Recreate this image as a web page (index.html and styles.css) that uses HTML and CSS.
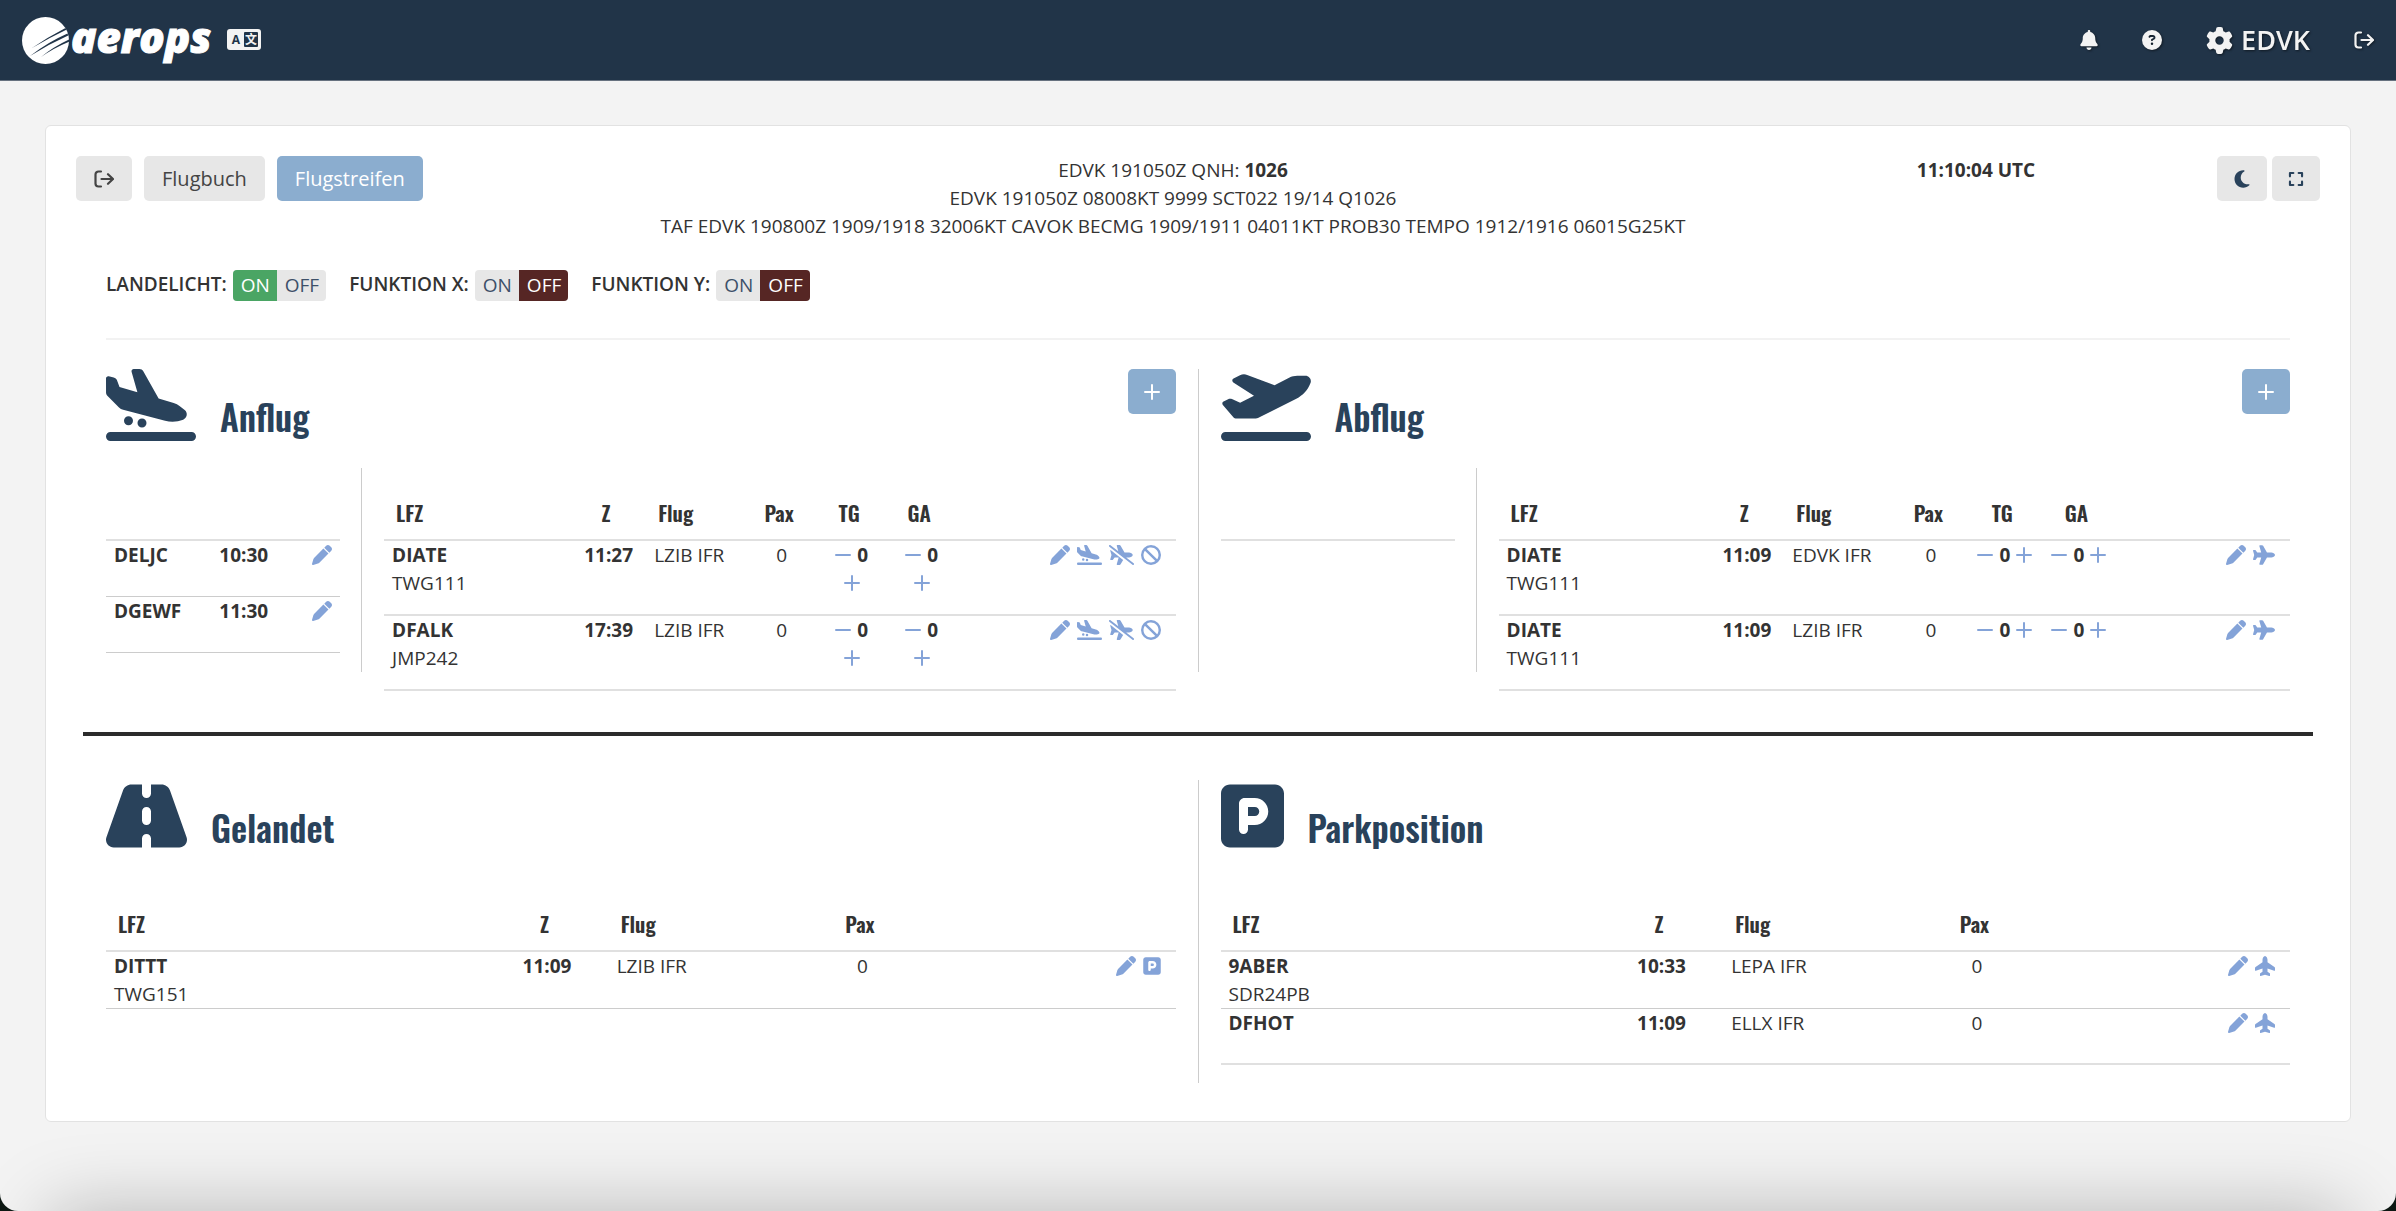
FILE: index.html
```html
<!DOCTYPE html>
<html lang="de">
<head>
<meta charset="utf-8">
<meta name="viewport" content="width=device-width, initial-scale=1">
<title>aerops – Flugstreifen</title>
<link rel="stylesheet" href="styles.css">
</head>
<body>
<svg class="sprite" aria-hidden="true">
  <symbol id="i-arrival" viewBox="0 0 640 512"><path d="M.3 166.9L0 68C0 57.7 9.5 50.1 19.5 52.3l35.6 7.9c10.6 2.3 19.2 9.9 23 20L96 128l127.3 37.6L181.8 20.4C178.9 10.2 186.6 0 197.2 0h40.1c11.6 0 22.2 6.2 27.9 16.3l109 193.8 107.2 31.7c15.9 4.7 30.8 12.5 43.7 22.8l34.4 27.6c24 19.2 18.1 57.3-10.7 68.2c-41.2 15.6-86.2 18.1-128.8 7L121.7 289.8c-11-2.9-21.2-8.7-29.3-16.9L9.5 189.4c-5.9-6-9.3-14.1-9.3-22.5zM32 448l576 0c17.7 0 32 14.3 32 32s-14.3 32-32 32L32 512c-17.7 0-32-14.3-32-32s14.3-32 32-32zm96-80a32 32 0 1 1 64 0 32 32 0 1 1 -64 0zm128-16a32 32 0 1 1 0 64 32 32 0 1 1 0-64z"/></symbol>
  <symbol id="i-departure" viewBox="0 0 640 512"><path d="M381 114.9L186.1 41.8c-16.7-6.2-35.2-5.3-51.1 2.7L89.1 67.4C78 73 77.2 88.5 87.6 95.2l146.9 94.5L136 240 77.8 214.1c-8.7-3.9-18.8-3.7-27.3 .6L18.3 230.8c-9.3 4.7-11.8 16.8-5 24.7l73.1 85.3c6.1 7.1 15 11.2 24.3 11.2H248.4c5 0 9.9-1.2 14.3-3.4L535.6 212.2c46.5-23.3 82.5-63.3 100.8-112C645.9 75 627.2 48 600.2 48H542.4c-20.2 0-40.2 4.8-58.2 14L381 114.9zM0 480c0 17.7 14.3 32 32 32H608c17.7 0 32-14.3 32-32s-14.3-32-32-32H32c-17.7 0-32 14.3-32 32z"/></symbol>
  <symbol id="i-road" viewBox="0 0 576 512"><path d="M256 32H181.2c-27.1 0-51.3 17.1-60.3 42.6L3.1 407.2C1.1 413 0 419.2 0 425.4C0 455.5 24.5 480 54.6 480H256V416c0-17.7 14.3-32 32-32s32 14.3 32 32v64H521.4c30.2 0 54.6-24.5 54.6-54.6c0-6.2-1.1-12.4-3.1-18.2L455.1 74.6C446 49.1 421.9 32 394.8 32H320V96c0 17.7-14.3 32-32 32s-32-14.3-32-32V32zm64 192v64c0 17.7-14.3 32-32 32s-32-14.3-32-32V224c0-17.7 14.3-32 32-32s32 14.3 32 32z"/></symbol>
  <symbol id="i-parking" viewBox="0 0 448 512"><path d="M64 32C28.7 32 0 60.7 0 96V416c0 35.3 28.7 64 64 64H384c35.3 0 64-28.7 64-64V96c0-35.3-28.7-64-64-64H64zM192 256h48c17.7 0 32-14.3 32-32s-14.3-32-32-32H192v64zm48 64H192v32c0 17.7-14.3 32-32 32s-32-14.3-32-32V288 168c0-22.1 17.9-40 40-40h72c53 0 96 43 96 96s-43 96-96 96z"/></symbol>
  <symbol id="i-plane" viewBox="0 0 576 512"><path d="M482.3 192c34.2 0 93.7 29 93.7 64c0 36-59.5 64-93.7 64l-116.6 0L265.2 495.9c-5.7 10-16.3 16.1-27.8 16.1l-56.2 0c-10.6 0-18.3-10.2-15.4-20.4l49-171.6L112 320 68.8 377.6c-3 4-7.8 6.4-12.8 6.4l-42 0c-7.8 0-14-6.3-14-14c0-1.3 .2-2.6 .5-3.9L32 256 .5 145.9c-.4-1.3-.5-2.6-.5-3.9c0-7.8 6.3-14 14-14l42 0c5 0 9.8 2.4 12.8 6.4L112 192l102.9 0-49-171.6C162.9 10.2 170.6 0 181.2 0l56.2 0c11.5 0 22.1 6.2 27.8 16.1L365.7 192l116.6 0z"/></symbol>
  <symbol id="i-plane-up" viewBox="0 0 512 512"><path d="M192 93.7C192 59.5 221 0 256 0c36 0 64 59.5 64 93.7l0 66.3L497.8 278.5c8.9 5.9 14.2 15.9 14.2 26.6v56.7c0 10.9-10.7 18.6-21.1 15.2L320 320v80l57.6 43.2c4 3 6.4 7.8 6.4 12.8v42c0 7.8-6.3 14-14 14c-1.3 0-2.6-.2-3.9-.5L256 480 145.9 511.5c-1.3 .4-2.6 .5-3.9 .5c-7.8 0-14-6.3-14-14V456c0-5 2.4-9.8 6.4-12.8L192 400V320L21.1 377C10.7 380.4 0 372.7 0 361.8V305.1c0-10.7 5.3-20.7 14.2-26.6L192 160V93.7z"/></symbol>
  <symbol id="i-plane-slash" viewBox="0 0 640 512"><path d="M514.3 192c34.2 0 93.7 29 93.7 64c0 36-59.5 64-93.7 64H440.6L630.8 469.1c10.4 8.2 12.3 23.3 4.1 33.7s-23.3 12.3-33.7 4.1L9.2 42.9C-1.2 34.7-3.1 19.6 5.1 9.2S28.4-3.1 38.8 5.1L238.1 161.3 197.8 20.4C194.9 10.2 202.6 0 213.2 0h56.2c11.5 0 22.1 6.2 27.8 16.1L397.7 192l116.6 0zM41.5 128.7l321 252.9L297.2 495.9c-5.7 10-16.3 16.1-27.8 16.1l-56.2 0c-10.6 0-18.3-10.2-15.4-20.4l49-171.6H144l-43.2 57.6c-3 4-7.8 6.4-12.8 6.4H46c-7.8 0-14-6.3-14-14c0-1.3 .2-2.6 .5-3.9L64 256 32.5 145.9c-.4-1.3-.5-2.6-.5-3.9c0-6.2 4-11.4 9.5-13.3z"/></symbol>
  <symbol id="i-ban" viewBox="0 0 512 512"><path d="M367.2 412.5L99.5 144.8C77.1 176.1 64 214.5 64 256c0 106 86 192 192 192c41.5 0 79.9-13.1 111.2-35.5zm45.3-45.3C434.9 335.9 448 297.5 448 256c0-106-86-192-192-192c-41.5 0-79.9 13.1-111.2 35.5L412.5 367.2zM0 256a256 256 0 1 1 512 0A256 256 0 1 1 0 256z"/></symbol>
  <symbol id="i-pen" viewBox="0 0 512 512"><path d="M362.7 19.3L314.3 67.7 444.3 197.7l48.4-48.4c25-25 25-65.5 0-90.5L453.3 19.3c-25-25-65.5-25-90.5 0zm-71 71L58.6 323.5c-10.4 10.4-18 23.3-22.2 37.4L1 481.2C-1.5 489.7 .8 498.8 7 505s15.3 8.5 23.7 6.1l120.3-35.4c14.1-4.2 27-11.8 37.4-22.2L421.7 220.3 291.7 90.3z"/></symbol>
  <symbol id="i-minus" viewBox="0 0 16 20"><path d="M1 10h14" fill="none" stroke="currentColor" stroke-width="2" stroke-linecap="round"/></symbol>
  <symbol id="i-plus" viewBox="0 0 16 20"><path d="M1 10h14M8 3v14" fill="none" stroke="currentColor" stroke-width="2" stroke-linecap="round"/></symbol>
  <symbol id="i-exit" viewBox="0 0 20 20"><path d="M7 2.500H4.500A3 3 0 0 0 1.500 5.500v9a3 3 0 0 0 3 3H7M7.500 10H19M14 5.200L19 10l-5 4.800" fill="none" stroke="currentColor" stroke-width="2.200" stroke-linecap="round" stroke-linejoin="round"/></symbol>
  <symbol id="i-moon" viewBox="0 0 384 512"><path d="M223.5 32C100 32 0 132.3 0 256S100 480 223.5 480c60.6 0 115.5-24.2 155.8-63.4c5-4.9 6.3-12.5 3.1-18.7s-10.1-9.7-17-8.5c-9.8 1.7-19.8 2.6-30.1 2.6c-96.9 0-175.5-78.8-175.5-176c0-65.8 36-123.1 89.3-153.3c6.1-3.5 9.2-10.5 7.7-17.3s-7.3-11.9-14.3-12.5c-6.3-.5-12.6-.8-19-.8z"/></symbol>
  <symbol id="i-expand" viewBox="0 0 18 20"><path d="M6 3.200H2.200V7M12 3.200h3.800V7M6 16.800H2.200V13M12 16.800h3.800V13" fill="none" stroke="currentColor" stroke-width="2.400" stroke-linecap="round" stroke-linejoin="round"/></symbol>
  <symbol id="i-bell" viewBox="0 0 448 512"><path d="M224 0c-17.7 0-32 14.3-32 32V51.2C119 66 64 130.6 64 208v18.8c0 47-17.3 92.4-48.5 127.6l-7.4 8.3c-8.4 9.4-10.4 22.9-5.3 34.4S19.4 416 32 416H416c12.6 0 24-7.4 29.2-18.9s3.1-25-5.3-34.4l-7.4-8.3C401.3 319.2 384 273.9 384 226.8V208c0-77.4-55-142-128-156.8V32c0-17.7-14.3-32-32-32zm45.3 493.3c12-12 18.7-28.3 18.7-45.3H224 160c0 17 6.7 33.3 18.7 45.3s28.3 18.7 45.3 18.7s33.3-6.7 45.3-18.7z"/></symbol>
  <symbol id="i-help" viewBox="0 0 512 512"><path d="M256 512A256 256 0 1 0 256 0a256 256 0 1 0 0 512zM169.8 165.3c7.9-22.3 29.1-37.3 52.8-37.3h58.3c34.9 0 63.1 28.3 63.1 63.1c0 22.6-12.1 43.5-31.7 54.8L280 264.4c-.2 13-10.9 23.6-24 23.6c-13.3 0-24-10.7-24-24V250.5c0-8.6 4.6-16.5 12.1-20.8l44.3-25.4c4.7-2.7 7.6-7.7 7.6-13.1c0-8.4-6.8-15.1-15.1-15.1H222.6c-3.4 0-6.4 2.1-7.5 5.3l-.4 1.2c-4.4 12.5-18.2 19-30.6 14.6s-19-18.2-14.6-30.6l.4-1.2zM224 352a32 32 0 1 1 64 0 32 32 0 1 1 -64 0z"/></symbol>
  <symbol id="i-gear" viewBox="0 0 512 512"><path d="M495.900 166.600c3.200 8.700 .5 18.400-6.400 24.600l-43.300 39.400c1.100 8.300 1.700 16.800 1.700 25.400s-.6 17.100-1.700 25.400l43.300 39.400c6.900 6.200 9.600 15.900 6.400 24.600c-4.400 11.900-9.700 23.300-15.800 34.300l-4.700 8.100c-6.600 11-14 21.400-22.100 31.200c-5.900 7.200-15.700 9.600-24.500 6.800l-55.700-17.700c-13.400 10.300-28.200 18.900-44 25.400l-12.500 57.100c-2 9.100-9 16.300-18.200 17.800c-13.800 2.300-28 3.500-42.500 3.500s-28.700-1.200-42.500-3.500c-9.200-1.500-16.200-8.700-18.200-17.800l-12.500-57.100c-15.800-6.500-30.600-15.100-44-25.400L83.100 425.900c-8.800 2.800-18.600 .3-24.500-6.800c-8.100-9.800-15.500-20.200-22.100-31.200l-4.700-8.100c-6.100-11-11.400-22.400-15.800-34.300c-3.200-8.700-.5-18.400 6.400-24.600l43.300-39.400C64.600 273.100 64 264.600 64 256s.6-17.100 1.700-25.400L22.400 191.200c-6.900-6.200-9.600-15.900-6.400-24.600c4.400-11.900 9.700-23.300 15.800-34.300l4.700-8.100c6.600-11 14-21.400 22.100-31.200c5.900-7.200 15.700-9.600 24.500-6.800l55.700 17.700c13.400-10.300 28.200-18.900 44-25.400l12.500-57.100c2-9.100 9-16.300 18.200-17.800C227.300 1.200 241.500 0 256 0s28.700 1.200 42.500 3.500c9.200 1.500 16.200 8.700 18.200 17.800l12.500 57.100c15.800 6.500 30.600 15.100 44 25.400l55.700-17.700c8.800-2.800 18.600-.3 24.500 6.800c8.100 9.800 15.500 20.200 22.100 31.200l4.700 8.100c6.100 11 11.400 22.400 15.800 34.300zM256 336a80 80 0 1 0 0-160 80 80 0 1 0 0 160z"/></symbol>
</svg>

<div class="app">
  <header class="topbar">
    <a class="logo" href="#" aria-label="aerops">
      <svg class="logo-mark" viewBox="0 0 47 47" aria-hidden="true">
        <circle cx="23.500" cy="23.500" r="23.500" fill="#fff"/>
        <path d="M10 31 Q26 20 43.500 11L44.300 12.800Q27 21 10 31zM8 39 Q26 25 45.500 16.500L46.200 18.500Q27 27 8 39zM19 40 Q31 30 47 22.500V24.800Q32 31 19 40z" fill="#213448"/>
      </svg>
      <span class="logo-name">aerops</span>
    </a>
    <button class="bare lang" aria-label="Sprache">
      <svg viewBox="0 0 34 22" aria-hidden="true">
        <rect width="34" height="21" rx="3" fill="#f3f3f3"/>
        <rect x="17" y="3" width="14" height="15" rx="1" fill="#213448"/>
        <text class="lang-glyph" x="9" y="15" fill="#213448">A</text>
        <text class="lang-glyph" x="24" y="15" fill="#f3f3f3">文</text>
      </svg>
    </button>
    <nav class="topnav" aria-label="Konto">
      <button class="bare" aria-label="Meldungen"><svg class="ic w18"><use href="#i-bell"/></svg></button>
      <button class="bare" aria-label="Hilfe"><svg class="ic w20"><use href="#i-help"/></svg></button>
      <a class="station" href="#"><svg class="ic gear"><use href="#i-gear"/></svg>EDVK</a>
      <button class="bare" aria-label="Abmelden"><svg class="ic w20"><use href="#i-exit"/></svg></button>
    </nav>
  </header>

  <main class="page">
    <div class="card">
      <div class="info">
        <div class="actions">
          <button class="btn btn-wide" aria-label="Zurück"><svg class="ic w20"><use href="#i-exit"/></svg></button>
          <button class="btn btn-wide">Flugbuch</button>
          <button class="btn btn-wide btn-primary">Flugstreifen</button>
        </div>
        <div class="weather">
          <p>EDVK 191050Z QNH: <b>1026</b></p>
          <p>EDVK 191050Z 08008KT 9999 SCT022 19/14 Q1026</p>
          <p>TAF EDVK 190800Z 1909/1918 32006KT CAVOK BECMG 1909/1911 04011KT PROB30 TEMPO 1912/1916 06015G25KT</p>
        </div>
        <time class="clock">11:10:04 UTC</time>
        <div class="view">
          <button class="btn btn-dark" aria-label="Nachtmodus"><svg class="ic w18"><use href="#i-moon"/></svg></button>
          <button class="btn btn-dark" aria-label="Vollbild"><svg class="ic w16"><use href="#i-expand"/></svg></button>
        </div>
      </div>

      <div class="body">
        <div class="switches">
          <div class="switch" role="radiogroup" aria-labelledby="sw1"><span id="sw1">LANDELICHT:</span>
            <span class="seg"><label class="on"><input type="radio" name="landelicht" checked>ON</label><label class="off"><input type="radio" name="landelicht">OFF</label></span></div>
          <div class="switch" role="radiogroup" aria-labelledby="sw2"><span id="sw2">FUNKTION X:</span>
            <span class="seg"><label class="on"><input type="radio" name="fx">ON</label><label class="off"><input type="radio" name="fx" checked>OFF</label></span></div>
          <div class="switch" role="radiogroup" aria-labelledby="sw3"><span id="sw3">FUNKTION Y:</span>
            <span class="seg"><label class="on"><input type="radio" name="fy">ON</label><label class="off"><input type="radio" name="fy" checked>OFF</label></span></div>
        </div>

        <div class="boards boards-top">
          <section class="board">
            <div class="board-head">
              <svg class="big w90"><use href="#i-arrival"/></svg><h2>Anflug</h2>
              <button class="btn btn-primary btn-add" aria-label="Anflug hinzufügen"><svg class="ic w16"><use href="#i-plus"/></svg></button>
            </div>
            <div class="split">
              <div class="side">
                <table class="strips">
                  <colgroup><col class="s1"><col class="s2"><col></colgroup>
                  <thead><tr><td colspan="3"></td></tr></thead>
                  <tbody class="short">
                    <tr><td><b>DELJC</b></td><td><b>10:30</b></td><td class="tools tight"><button class="bare" aria-label="Bearbeiten"><svg class="ic w20"><use href="#i-pen"/></svg></button></td></tr>
                    <tr><td><b>DGEWF</b></td><td><b>11:30</b></td><td class="tools tight"><button class="bare" aria-label="Bearbeiten"><svg class="ic w20"><use href="#i-pen"/></svg></button></td></tr>
                  </tbody>
                </table>
              </div>
              <table class="strips">
                <colgroup><col class="a1"><col class="a2"><col class="a3"><col class="a4"><col class="a4"><col class="a4"><col></colgroup>
                <thead><tr><th>LFZ</th><th class="c">Z</th><th>Flug</th><th class="c">Pax</th><th class="c">TG</th><th class="c">GA</th><td></td></tr></thead>
                <tbody class="tall">
                  <tr>
                    <td><b>DIATE</b><br>TWG111</td><td class="c"><b>11:27</b></td><td>LZIB IFR</td><td class="c">0</td>
                    <td><div class="count stacked"><button class="bare" aria-label="TG weniger"><svg class="ic w16"><use href="#i-minus"/></svg></button><b>0</b><button class="bare" aria-label="TG mehr"><svg class="ic w16"><use href="#i-plus"/></svg></button></div></td>
                    <td><div class="count stacked"><button class="bare" aria-label="GA weniger"><svg class="ic w16"><use href="#i-minus"/></svg></button><b>0</b><button class="bare" aria-label="GA mehr"><svg class="ic w16"><use href="#i-plus"/></svg></button></div></td>
                    <td class="tools"><button class="bare" aria-label="Bearbeiten"><svg class="ic w20"><use href="#i-pen"/></svg></button><button class="bare" aria-label="Gelandet"><svg class="ic w25"><use href="#i-arrival"/></svg></button><button class="bare" aria-label="Verlassen"><svg class="ic w25"><use href="#i-plane-slash"/></svg></button><button class="bare" aria-label="Löschen"><svg class="ic w20"><use href="#i-ban"/></svg></button></td>
                  </tr>
                  <tr>
                    <td><b>DFALK</b><br>JMP242</td><td class="c"><b>17:39</b></td><td>LZIB IFR</td><td class="c">0</td>
                    <td><div class="count stacked"><button class="bare" aria-label="TG weniger"><svg class="ic w16"><use href="#i-minus"/></svg></button><b>0</b><button class="bare" aria-label="TG mehr"><svg class="ic w16"><use href="#i-plus"/></svg></button></div></td>
                    <td><div class="count stacked"><button class="bare" aria-label="GA weniger"><svg class="ic w16"><use href="#i-minus"/></svg></button><b>0</b><button class="bare" aria-label="GA mehr"><svg class="ic w16"><use href="#i-plus"/></svg></button></div></td>
                    <td class="tools"><button class="bare" aria-label="Bearbeiten"><svg class="ic w20"><use href="#i-pen"/></svg></button><button class="bare" aria-label="Gelandet"><svg class="ic w25"><use href="#i-arrival"/></svg></button><button class="bare" aria-label="Verlassen"><svg class="ic w25"><use href="#i-plane-slash"/></svg></button><button class="bare" aria-label="Löschen"><svg class="ic w20"><use href="#i-ban"/></svg></button></td>
                  </tr>
                </tbody>
              </table>
            </div>
          </section>

          <section class="board">
            <div class="board-head">
              <svg class="big w90"><use href="#i-departure"/></svg><h2>Abflug</h2>
              <button class="btn btn-primary btn-add" aria-label="Abflug hinzufügen"><svg class="ic w16"><use href="#i-plus"/></svg></button>
            </div>
            <div class="split">
              <div class="side">
                <table class="strips"><thead><tr><td></td></tr></thead></table>
              </div>
              <table class="strips">
                <colgroup><col class="d1"><col class="a2"><col class="d3"><col class="d4"><col class="d4"><col class="d4"><col></colgroup>
                <thead><tr><th>LFZ</th><th class="c">Z</th><th>Flug</th><th class="c">Pax</th><th class="c">TG</th><th class="c">GA</th><td></td></tr></thead>
                <tbody class="tall">
                  <tr>
                    <td><b>DIATE</b><br>TWG111</td><td class="c"><b>11:09</b></td><td>EDVK IFR</td><td class="c">0</td>
                    <td><div class="count"><button class="bare" aria-label="TG weniger"><svg class="ic w16"><use href="#i-minus"/></svg></button><b>0</b><button class="bare" aria-label="TG mehr"><svg class="ic w16"><use href="#i-plus"/></svg></button></div></td>
                    <td><div class="count"><button class="bare" aria-label="GA weniger"><svg class="ic w16"><use href="#i-minus"/></svg></button><b>0</b><button class="bare" aria-label="GA mehr"><svg class="ic w16"><use href="#i-plus"/></svg></button></div></td>
                    <td class="tools"><button class="bare" aria-label="Bearbeiten"><svg class="ic w20"><use href="#i-pen"/></svg></button><button class="bare" aria-label="Abgeflogen"><svg class="ic w22"><use href="#i-plane"/></svg></button></td>
                  </tr>
                  <tr>
                    <td><b>DIATE</b><br>TWG111</td><td class="c"><b>11:09</b></td><td>LZIB IFR</td><td class="c">0</td>
                    <td><div class="count"><button class="bare" aria-label="TG weniger"><svg class="ic w16"><use href="#i-minus"/></svg></button><b>0</b><button class="bare" aria-label="TG mehr"><svg class="ic w16"><use href="#i-plus"/></svg></button></div></td>
                    <td><div class="count"><button class="bare" aria-label="GA weniger"><svg class="ic w16"><use href="#i-minus"/></svg></button><b>0</b><button class="bare" aria-label="GA mehr"><svg class="ic w16"><use href="#i-plus"/></svg></button></div></td>
                    <td class="tools"><button class="bare" aria-label="Bearbeiten"><svg class="ic w20"><use href="#i-pen"/></svg></button><button class="bare" aria-label="Abgeflogen"><svg class="ic w22"><use href="#i-plane"/></svg></button></td>
                  </tr>
                </tbody>
              </table>
            </div>
          </section>
        </div>
      </div>

      <hr class="runway">

      <div class="body">
        <div class="boards boards-bottom">
          <section class="board">
            <div class="board-head"><svg class="big w81"><use href="#i-road"/></svg><h2>Gelandet</h2></div>
            <table class="strips">
              <colgroup><col class="g1"><col class="g2"><col class="g3"><col class="g4"><col></colgroup>
              <thead><tr><th>LFZ</th><th class="c">Z</th><th>Flug</th><th class="c">Pax</th><td></td></tr></thead>
              <tbody class="short">
                <tr><td><b>DITTT</b><br>TWG151</td><td class="c"><b>11:09</b></td><td>LZIB IFR</td><td class="c">0</td>
                  <td class="tools"><button class="bare" aria-label="Bearbeiten"><svg class="ic w20"><use href="#i-pen"/></svg></button><button class="bare" aria-label="Parken"><svg class="ic w18"><use href="#i-parking"/></svg></button></td></tr>
              </tbody>
            </table>
          </section>
          <section class="board">
            <div class="board-head"><svg class="big w63"><use href="#i-parking"/></svg><h2>Parkposition</h2></div>
            <table class="strips">
              <colgroup><col class="g1"><col class="g2"><col class="g3"><col class="g4"><col></colgroup>
              <thead><tr><th>LFZ</th><th class="c">Z</th><th>Flug</th><th class="c">Pax</th><td></td></tr></thead>
              <tbody class="short">
                <tr><td><b>9ABER</b><br>SDR24PB</td><td class="c"><b>10:33</b></td><td>LEPA IFR</td><td class="c">0</td>
                  <td class="tools"><button class="bare" aria-label="Bearbeiten"><svg class="ic w20"><use href="#i-pen"/></svg></button><button class="bare" aria-label="Start"><svg class="ic w20"><use href="#i-plane-up"/></svg></button></td></tr>
                <tr class="last"><td><b>DFHOT</b></td><td class="c"><b>11:09</b></td><td>ELLX IFR</td><td class="c">0</td>
                  <td class="tools"><button class="bare" aria-label="Bearbeiten"><svg class="ic w20"><use href="#i-pen"/></svg></button><button class="bare" aria-label="Start"><svg class="ic w20"><use href="#i-plane-up"/></svg></button></td></tr>
              </tbody>
            </table>
          </section>
        </div>
      </div>
    </div>
  </main>
  <div class="shade"></div>
</div>
</body>
</html>
```
FILE: styles.css
```css
* { box-sizing: border-box; }

html { background: #0c1712; }

body {
  margin: 0;
  font-family: "Open Sans", "Noto Sans", sans-serif;
  font-size: 19px;
  line-height: 28px;
  color: #333;
}

.sprite { display: none; }

.app {
  display: flex;
  flex-direction: column;
  min-height: 100vh;
  overflow: hidden;
  background: #f3f3f3;
  border-radius: 0 0 18px 18px;
}

/* icons */
.ic { display: block; height: 20px; fill: currentColor; }
.w16 { width: 16px; }
.w18 { width: 18px; }
.w20 { width: 20px; }
.w22 { width: 22px; }
.w25 { width: 25px; }
.big { height: 72px; fill: currentColor; }
.w63 { width: 63px; }
.w81 { width: 81px; }
.w90 { width: 90px; }

.bare {
  padding: 0;
  border: 0;
  background: none;
  color: inherit;
  font: inherit;
  cursor: pointer;
}

/* top bar */
.topbar {
  display: flex;
  align-items: center;
  height: 81px;
  padding: 0 22px;
  background: #213448;
  border-bottom: 1px solid #66717f;
  color: #f3f3f3;
}
.logo {
  display: flex;
  align-items: center;
  gap: 2px;
  color: #fff;
  text-decoration: none;
}
.logo-mark { width: 47px; height: 47px; }
.logo-name {
  font-size: 42px;
  line-height: 48px;
  padding-bottom: 6px;
  font-weight: 800;
  font-style: italic;
  -webkit-text-stroke: 1px #fff;
}
.lang { margin-left: 16px; }
.lang svg { display: block; width: 34px; height: 22px; }
.lang-glyph {
  font-family: "Open Sans", "Noto Sans CJK SC", sans-serif;
  font-size: 12px;
  font-weight: 700;
  text-anchor: middle;
}
.topnav {
  display: flex;
  align-items: center;
  gap: 44px;
  margin-left: auto;
  filter: drop-shadow(1px 1px 1px rgba(0, 0, 0, .5));
}
.station {
  display: flex;
  align-items: center;
  gap: 8px;
  color: inherit;
  text-decoration: none;
  font-size: 27px;
  font-weight: 600;
}
.gear { width: 27px; height: 27px; }

/* card */
.page { padding: 44px 45px 0; }
.card {
  padding: 30px 30px 38px;
  background: #fff;
  border: 1px solid #e2e2e2;
  border-radius: 6px;
}
.body { padding: 0 30px; }

.info {
  display: grid;
  grid-template-columns: 364fr 1466fr 140fr 274fr;
  margin-bottom: 30px;
}
.actions { display: flex; align-items: flex-start; gap: 12px; }
.view { display: flex; align-items: flex-start; justify-content: flex-end; gap: 5px; }
.weather { text-align: center; white-space: nowrap; }
.weather p { margin: 0; }
.clock { text-align: center; font-weight: 700; white-space: nowrap; }

.btn {
  display: flex;
  align-items: center;
  justify-content: center;
  height: 45px;
  padding: 0 16px;
  border: 0;
  border-radius: 5px;
  background: #e7e7e7;
  color: #444;
  font: inherit;
  font-size: 20px;
  cursor: pointer;
}
.btn-wide { padding: 0 18px; }
.btn-dark { color: #29425b; }
.btn-primary { background: #8badcf; color: #fff; }
.btn-add { align-self: flex-start; margin-left: auto; }

.switches {
  display: flex;
  gap: 23px;
  padding-bottom: 37px;
  border-bottom: 2px solid #f2f2f2;
  font-weight: 600;
}
.switch { display: flex; gap: 6px; }
.seg {
  display: flex;
  overflow: hidden;
  border-radius: 4px;
  background: #e7e7e7;
  color: #3d5069;
  font-weight: 400;
  line-height: 31px;
}
.seg label { padding: 0 7px 0 8px; cursor: pointer; }
.seg input { appearance: none; width: 0; height: 0; margin: 0; float: left; }
.seg .on:has(:checked) { background: #4aa564; color: #fff; }
.seg .off:has(:checked) { background: #562624; color: #fff; }

/* boards */
.boards { display: flex; gap: 45px; }
.board { flex: 1 1 0; min-width: 0; }
.boards-top { padding-top: 29px; }
.boards-bottom { padding-bottom: 18px; }
.boards-top,
.boards-bottom {
  background: linear-gradient(#ccc, #ccc) no-repeat;
  background-position: 50% 29px;
  background-size: 1px calc(100% - 48px);
}
.boards-bottom {
  background-position: 50% 0;
  background-size: 1px 100%;
}
.board-head {
  display: flex;
  align-items: flex-end;
  gap: 24px;
  height: 99px;
  padding-bottom: 27px;
  color: #29425b;
}
h2,
th { font-family: Oswald, "Roboto Condensed", "Liberation Sans Narrow", sans-serif; }
h2 { margin: 0; font-size: 35px; line-height: 50px; font-weight: 600; }

.split {
  display: grid;
  grid-template-columns: minmax(0, 256fr) minmax(0, 791fr);
  column-gap: 22px;
}
.side {
  padding-right: 22px;
  background: linear-gradient(#ccc, #ccc) no-repeat 100% 0 / 1px calc(100% - 19px);
}

.strips {
  width: 100%;
  table-layout: fixed;
  border-spacing: 0;
}
.strips th,
.strips td {
  padding: 0 3px 0 8px;
  border-bottom: 2px solid #e0e0e0;
  text-align: left;
  vertical-align: top;
  white-space: nowrap;
}
.strips thead th,
.strips thead td {
  height: 73px;
  padding: 0 12px;
  padding-bottom: 12px;
  vertical-align: bottom;
  font-size: 21px;
  font-weight: 600;
}
.strips .tall td { height: 75px; }
.strips .short td { height: 56px; border-bottom: 1px solid #ccc; }
.strips .short .last td { border-bottom: 2px solid #e0e0e0; }
.strips .c { text-align: center; }

.s1 { width: 45%; }
.s2 { width: 33%; }
.a1 { width: 23%; }
.a2 { width: 80px; }
.a3 { width: 98px; }
.a4 { width: 70px; }
.d1 { width: 26%; }
.d3 { width: 107px; }
.d4 { width: 74px; }
.g1 { width: 35%; }
.g2 { width: 12%; }
.g3 { width: 15%; }
.g4 { width: 17%; }

/* in the narrow columns the counter breaks its plus onto a second line */
.count {
  display: flex;
  flex-wrap: wrap;
  align-items: center;
  justify-content: center;
  gap: 0 6px;
  color: #333;
}
.count .bare { padding: 4px 0; color: #84a3d8; }
.stacked { width: 50px; margin: 0 auto; }

.strips .tools {
  padding-top: 4px;
  padding-right: 15px;
  text-align: right;
  color: #84a3d8;
}
.strips .tight { padding-right: 8px; }
.tools .bare { vertical-align: top; margin-left: 7px; }

.runway {
  height: 4px;
  margin: 41px 7px 44px;
  border: 0;
  background: #2b2b2b;
}

/* soft shadow rising from the lower window edge */
.shade {
  flex: none;
  height: 200px;
  margin: auto 50px -200px;
  box-shadow: 0 0 75px 0 rgba(0, 0, 0, .25);
}
```
